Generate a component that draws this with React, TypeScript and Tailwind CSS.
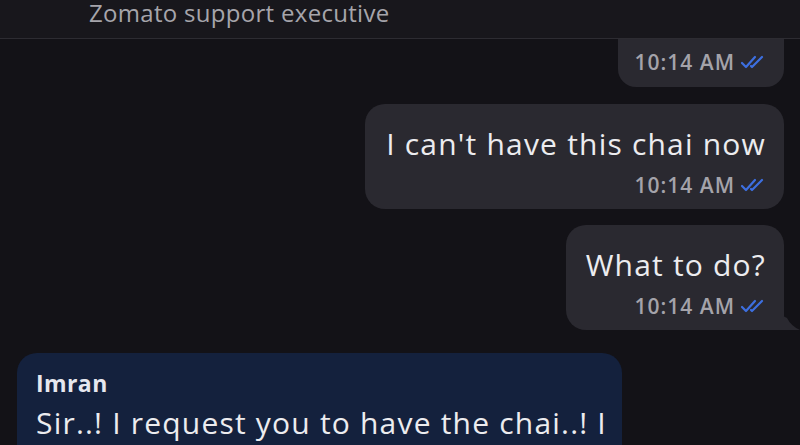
import React from "react";

function Ticks() {
    return (
        <svg width="26" height="14" viewBox="0 0 26 14" className="fill-none stroke-[#3d6fe0]" strokeWidth="2.2" strokeLinecap="round" strokeLinejoin="round">
            <path d="M2 8 L6 12 L15 2" />
            <path d="M11 11 L12 12 L22 2" />
        </svg>
    );
}

function Time() {
    return (
        <div className="flex items-center justify-end gap-[5px] text-[21px] leading-[24px] tracking-[1px] text-[#a4a3aa] font-['Open_Sans',sans-serif] font-semibold">
            <span>10:14 AM</span>
            <Ticks />
        </div>
    );
}

export default function App() {
    return (
        <div className="w-[800px] h-[445px] overflow-hidden bg-[#131217] flex flex-col font-['Open_Sans','Noto_Sans',sans-serif]">
            <div className="h-[39px] shrink-0 bg-[#18171c] border-b border-[#2d2c32] pl-[89px] flex items-start">
                <span className="text-[24px] leading-[26px] tracking-[0.3px] text-[#a6a5ab]">Zomato support executive</span>
            </div>

            <div className="flex flex-col items-end pr-[16px] pl-[17px]">
                <div className="w-[166px] h-[48px] bg-[#2a2930] rounded-b-[18px] pr-[18px] pt-[11px]">
                    <Time />
                </div>

                <div className="mt-[17px] bg-[#2a2930] rounded-[20px] pl-[18px] pr-[18px] pt-[22px] pb-[12px] w-[419px]">
                    <p className="text-[30px] leading-[36px] tracking-[1.2px] text-[#ececef] text-right whitespace-nowrap">I can't have this chai now</p>
                    <div className="mt-[11px]"><Time /></div>
                </div>

                <div className="relative mt-[16px] bg-[#2a2930] rounded-[20px] rounded-br-none pl-[18px] pr-[18px] pt-[22px] pb-[12px] w-[218px]">
                    <p className="text-[30px] leading-[36px] tracking-[1.2px] text-[#ececef] text-right whitespace-nowrap">What to do?</p>
                    <div className="mt-[11px]"><Time /></div>
                    <svg className="absolute -right-[16px] bottom-0" width="17" height="14" viewBox="0 0 17 14">
                        <path d="M0 0 L0 14 L17 14 Q8 10 4 2 Z" fill="#2a2930" />
                    </svg>
                </div>

                <div className="self-start mt-[23px] w-[605px] bg-[#14213d] rounded-t-[20px] pl-[19px] pr-[10px] pt-[16px] pb-[20px]">
                    <p className="text-[23px] leading-[28px] tracking-[0.4px] font-bold text-[#e6e7ee]">Imran</p>
                    <p className="mt-[8px] text-[30px] leading-[36px] tracking-[1.2px] text-[#ececef] whitespace-nowrap">Sir..! I request you to have the chai..! I</p>
                </div>
            </div>
        </div>
    );
}
